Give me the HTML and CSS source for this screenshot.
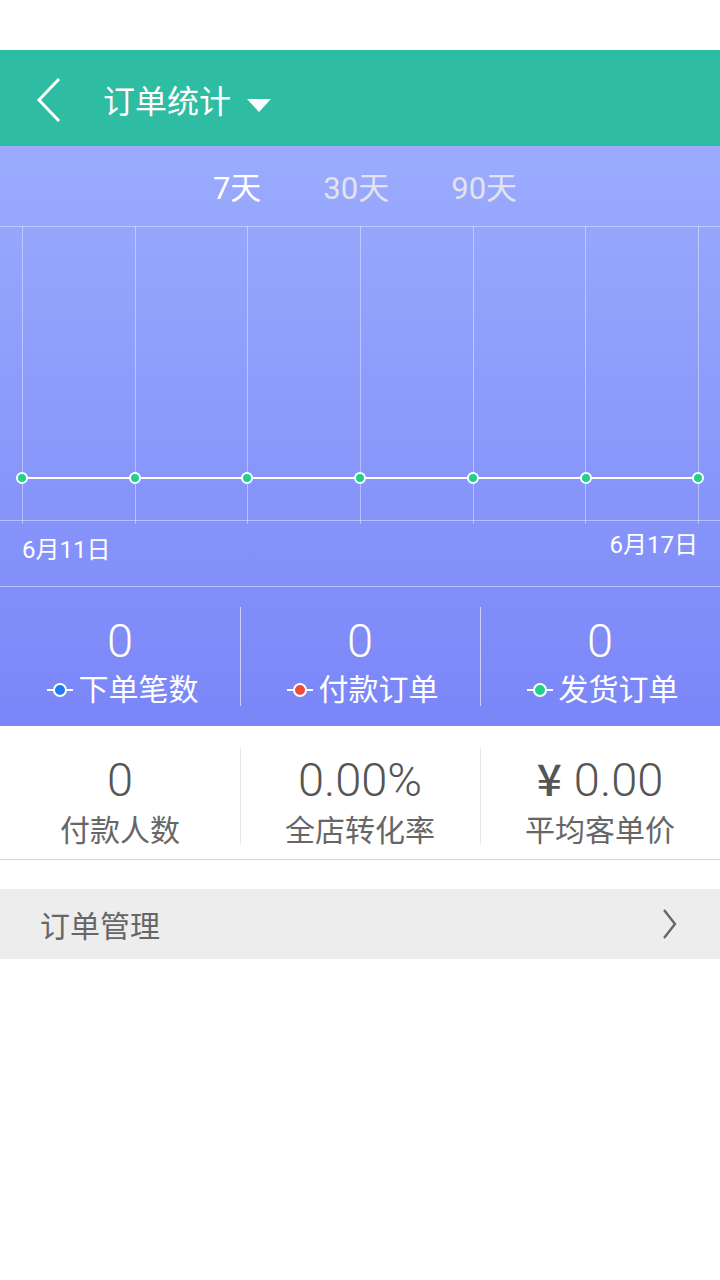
FILE: index.html
```html
<!DOCTYPE html>
<html lang="zh-CN">
<head>
<meta charset="utf-8">
<title>订单统计</title>
<link rel="stylesheet" href="styles.css">
</head>
<body>
<div class="page">
  <div class="status"></div>
  <header class="header">
    <span class="back">
      <svg width="30" height="46" viewBox="0 0 30 46"><polyline points="23,2 3,23 23,44" fill="none" stroke="#fff" stroke-width="3"/></svg>
    </span>
    <span class="title">订单统计</span>
    <span class="caret"></span>
  </header>

  <section class="panel">
    <nav class="tabs">
      <span class="tab active">7天</span>
      <span class="tab">30天</span>
      <span class="tab">90天</span>
    </nav>
    <div class="chart">
      <svg width="720" height="300" viewBox="0 0 720 300">
        <g stroke="rgba(255,255,255,0.4)" stroke-width="1">
          <line x1="0" y1="0.5" x2="720" y2="0.5"/>
          <line x1="0" y1="294.5" x2="720" y2="294.5"/>
          <line x1="22.5" y1="0" x2="22.5" y2="298"/>
          <line x1="135.5" y1="0" x2="135.5" y2="298"/>
          <line x1="247.5" y1="0" x2="247.5" y2="298"/>
          <line x1="360.5" y1="0" x2="360.5" y2="298"/>
          <line x1="473.5" y1="0" x2="473.5" y2="298"/>
          <line x1="585.5" y1="0" x2="585.5" y2="298"/>
          <line x1="698.5" y1="0" x2="698.5" y2="298"/>
        </g>
        <line x1="22" y1="252" x2="698" y2="252" stroke="#fff" stroke-width="2"/>
        <g fill="#1dd38a" stroke="#fff" stroke-width="2">
          <circle cx="22" cy="252" r="5"/>
          <circle cx="135" cy="252" r="5"/>
          <circle cx="247" cy="252" r="5"/>
          <circle cx="360" cy="252" r="5"/>
          <circle cx="473" cy="252" r="5"/>
          <circle cx="586" cy="252" r="5"/>
          <circle cx="698" cy="252" r="5"/>
        </g>
      </svg>
    </div>
    <div class="dates">
      <span class="date first">6月11日</span>
      <span class="date last">6月17日</span>
    </div>
    <div class="stats">
      <div class="stat">
        <div class="stat-num">0</div>
        <div class="stat-label"><span class="legend blue"></span>下单笔数</div>
      </div>
      <div class="stat">
        <div class="stat-num">0</div>
        <div class="stat-label"><span class="legend red"></span>付款订单</div>
      </div>
      <div class="stat">
        <div class="stat-num">0</div>
        <div class="stat-label"><span class="legend green"></span>发货订单</div>
      </div>
    </div>
  </section>

  <section class="metrics">
    <div class="metric">
      <div class="metric-num">0</div>
      <div class="metric-label">付款人数</div>
    </div>
    <div class="metric">
      <div class="metric-num">0.00%</div>
      <div class="metric-label">全店转化率</div>
    </div>
    <div class="metric">
      <div class="metric-num"><span class="yen">¥</span>0.00</div>
      <div class="metric-label">平均客单价</div>
    </div>
  </section>

  <div class="menu">
    <span class="menu-text">订单管理</span>
    <svg class="menu-arrow" width="16" height="32" viewBox="0 0 16 32"><polyline points="2,2 13,16 2,30" fill="none" stroke="#666" stroke-width="2.4"/></svg>
  </div>
</div>
</body>
</html>
```

FILE: styles.css
```css
html, body {
  margin: 0;
  padding: 0;
  background: #fff;
}
.page {
  width: 720px;
  font-family: Roboto, "Noto Sans CJK SC", sans-serif;
}
.status {
  height: 50px;
  background: #fff;
}
.header {
  height: 96px;
  background: #2ebda3;
  display: flex;
  align-items: center;
  color: #fff;
}
.back {
  display: flex;
  margin-left: 36px;
  margin-top: 4px;
}
.title {
  margin-left: 37px;
  font-size: 32px;
  line-height: 40px;
  font-family: "Noto Sans CJK SC", sans-serif;
  margin-top: 2px;
}
.caret {
  width: 0;
  height: 0;
  border-left: 12px solid transparent;
  border-right: 12px solid transparent;
  border-top: 13px solid #fff;
  margin-left: 16px;
  margin-top: 14px;
}
.panel {
  background: linear-gradient(180deg, #9babfd 0%, #8c9bfb 45%, #7a86f8 100%);
  color: #fff;
}
.tabs {
  height: 80px;
  display: flex;
  align-items: center;
  justify-content: center;
  gap: 62px;
  padding-left: 10px;
  box-sizing: border-box;
  padding-top: 6px;
}
.tab {
  font-size: 31px;
  line-height: 40px;
  color: #e2e3ee;
}
.tab.active {
  color: #fff;
}
.chart {
  height: 300px;
}
.chart svg {
  display: block;
}
.dates {
  height: 60px;
  display: flex;
  justify-content: space-between;
  padding: 0 22px;
  font-size: 24px;
  line-height: 30px;
}
.date.first {
  margin-top: 9px;
}
.date.last {
  margin-top: 4px;
}
.stats {
  display: flex;
  border-top: 1px solid rgba(255,255,255,0.45);
  height: 139px;
}
.stat {
  flex: 1;
  display: flex;
  flex-direction: column;
  align-items: center;
  padding-top: 29px;
  position: relative;
}
.stat + .stat::before {
  content: "";
  position: absolute;
  left: 0;
  top: 20px;
  height: 99px;
  width: 1px;
  background: rgba(255,255,255,0.6);
}
.stat-num {
  font-size: 47px;
  font-weight: 300;
  line-height: 50px;
}
.stat-num, .metric-num {
  font-family: Roboto, sans-serif;
}
.stat-label {
  margin-top: 4px;
  font-size: 30px;
  line-height: 40px;
  display: flex;
  align-items: center;
  margin-left: 5px;
}
.legend {
  width: 26px;
  height: 12px;
  margin-right: 6px;
  position: relative;
  display: inline-block;
}
.legend::before {
  content: "";
  position: absolute;
  left: 0;
  right: 0;
  top: 5px;
  height: 2px;
  background: #fff;
}
.legend::after {
  content: "";
  position: absolute;
  left: 6px;
  top: -1px;
  width: 10px;
  height: 10px;
  border: 2px solid #fff;
  border-radius: 50%;
}
.legend.blue::after { background: #1e7bf0; }
.legend.red::after { background: #f04b3a; }
.legend.green::after { background: #1dd38a; }

.metrics {
  display: flex;
  height: 133px;
  border-bottom: 1px solid #d5d5d5;
}
.metric {
  flex: 1;
  display: flex;
  flex-direction: column;
  align-items: center;
  padding-top: 29px;
  position: relative;
}
.metric + .metric::before {
  content: "";
  position: absolute;
  left: 0;
  top: 22px;
  height: 97px;
  width: 1px;
  background: #e8e8e8;
}
.metric-num {
  font-size: 47px;
  font-weight: 300;
  line-height: 50px;
  color: #555;
}
.yen {
  font-family: "Noto Sans CJK SC", sans-serif;
  font-weight: 500;
  font-size: 44px;
  line-height: 1;
  margin-right: 12px;
}
.metric-label {
  margin-top: 6px;
  font-size: 30px;
  line-height: 40px;
  color: #666;
}
.menu {
  margin-top: 29px;
  height: 70px;
  background: #ededed;
  display: flex;
  align-items: center;
  justify-content: space-between;
  padding: 0 42px 0 40px;
}
.menu-text {
  font-size: 30px;
  line-height: 40px;
  color: #666;
  font-family: "Noto Sans CJK SC", sans-serif;
}
.menu-arrow {
  display: block;
}
```
